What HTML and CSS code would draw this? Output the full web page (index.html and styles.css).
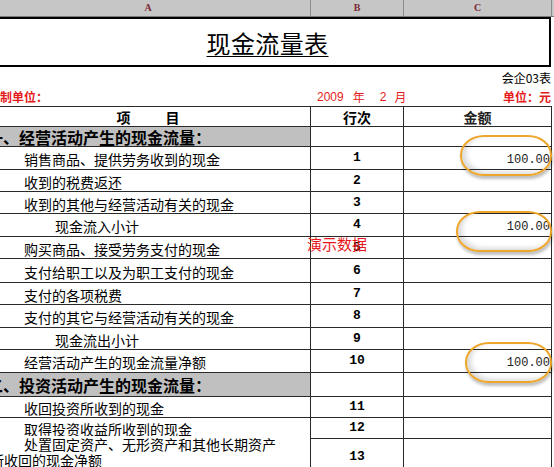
FILE: index.html
```html
<!DOCTYPE html>
<html lang="zh">
<head>
<meta charset="utf-8">
<title>现金流量表</title>
<link rel="stylesheet" href="styles.css">
</head>
<body>
<div class="sheet">
  <div class="colbar">
    <div class="ch">A</div><div class="ch">B</div><div class="ch">C</div><div class="ch"></div>
  </div>
  <div class="title"><span class="title-text">现金流量表</span></div>
  <div class="meta1">会企03表</div>
  <div class="meta2">
    <div class="m-a">编制单位：</div>
    <div class="m-b"><span>2009</span><span class="gap1">年</span><span class="gap2">2</span><span class="gap3">月</span></div>
    <div class="m-c">单位：元</div>
  </div>
  <div class="grid">
    <div class="c a hd r-h">项&nbsp;&nbsp;&nbsp;&nbsp;&nbsp;&nbsp;&nbsp;&nbsp;&nbsp;&nbsp;&nbsp;目</div><div class="c b hd r-h">行次</div><div class="c v hd r-h">金额</div>

    <div class="c a sec r-s1">一、经营活动产生的现金流量：</div><div class="c b r-s1"></div><div class="c v r-s1"></div>

    <div class="c a r1">销售商品、提供劳务收到的现金</div><div class="c b r1">1</div><div class="c v r1">100.00</div>
    <div class="c a r2">收到的税费返还</div><div class="c b r2">2</div><div class="c v r2"></div>
    <div class="c a r3">收到的其他与经营活动有关的现金</div><div class="c b r3">3</div><div class="c v r3"></div>
    <div class="c a sub r4">现金流入小计</div><div class="c b r4">4</div><div class="c v r4">100.00</div>
    <div class="c a r5">购买商品、接受劳务支付的现金</div><div class="c b r5">5</div><div class="c v r5"></div>
    <div class="c a r6">支付给职工以及为职工支付的现金</div><div class="c b r6">6</div><div class="c v r6"></div>
    <div class="c a r7">支付的各项税费</div><div class="c b r7">7</div><div class="c v r7"></div>
    <div class="c a r8">支付的其它与经营活动有关的现金</div><div class="c b r8">8</div><div class="c v r8"></div>
    <div class="c a sub r9">现金流出小计</div><div class="c b r9">9</div><div class="c v r9"></div>
    <div class="c a r10">经营活动产生的现金流量净额</div><div class="c b r10">10</div><div class="c v r10">100.00</div>

    <div class="c a sec r-s2">二、投资活动产生的现金流量：</div><div class="c b r-s2"></div><div class="c v r-s2"></div>

    <div class="c a r11">收回投资所收到的现金</div><div class="c b r11">11</div><div class="c v r11"></div>
    <div class="c a r12">取得投资收益所收到的现金</div><div class="c b r12">12</div><div class="c v r12"></div>
    <div class="c a wrap r13"><span class="l1">处置固定资产、无形资产和其他长期资产</span><span class="l2">所收回的现金净额</span></div><div class="c b r13">13</div><div class="c v r13"></div>
  </div>
</div>

<div class="ring ring1"></div>
<div class="ring ring2"></div>
<div class="ring ring3"></div>
<div class="demo">演示数据</div>
</body>
</html>
```

FILE: styles.css
```css
html, body {
  margin: 0;
  padding: 0;
  background: #fff;
}
body {
  width: 554px;
  height: 467px;
  overflow: hidden;
  position: relative;
  font-family: "Noto Sans CJK SC", "Noto Sans", sans-serif;
  color: #000;
}
.sheet {
  margin-left: -14px;
  width: 570px;
}

/* column letter bar */
.colbar {
  display: grid;
  grid-template-columns: 324px 92px 147px 1fr;
  column-gap: 1px;
  height: 16px;
  background: #8c8c8c;
  border-bottom: 1px solid #7a7a7a;
}
.ch {
  background: #c6c6c6;
  color: #7a2a35;
  font-family: "Liberation Serif", serif;
  font-weight: bold;
  font-size: 10px;
  line-height: 16px;
  text-align: center;
}

/* title box */
.title {
  width: 563px;
  height: 46px;
  border-top: 2px solid #000;
  border-bottom: 2px solid #000;
  border-right: 2px solid #000;
  display: flex;
  align-items: center;
  justify-content: center;
}
.title-text {
  font-size: 24px;
  line-height: 28px;
  font-weight: 400;
  text-decoration: underline;
  text-decoration-thickness: 1px;
  text-underline-offset: 3px;
  margin-top: 2px;
  letter-spacing: 0.4px;
}

.meta1 {
  width: 565px;
  height: 20px;
  font-size: 12px;
  line-height: 22px;
  text-align: right;
}
.meta2 {
  display: grid;
  grid-template-columns: 324px 92px 147px;
  column-gap: 1px;
  height: 19px;
  font-size: 12px;
  line-height: 20px;
  color: #e41b1b;
}
.m-a {
  padding-left: 2px;
  font-weight: bold;
}
.m-b {
  padding-left: 6px;
  font-family: "Liberation Sans", "Noto Sans CJK SC", sans-serif;
  font-size: 12px;
  display: flex;
}
.gap1 {
  margin-left: 9px;
  font-family: "Noto Sans CJK SC", sans-serif;
}
.gap2 {
  margin-left: 15px;
}
.gap3 {
  margin-left: 8px;
  font-family: "Noto Sans CJK SC", sans-serif;
}
.m-c {
  text-align: right;
  font-weight: bold;
}

/* table grid */
.grid {
  display: grid;
  grid-template-columns: 324px 92px 147px;
  grid-template-rows: 19px 19px 22px 21px 21px 22px 21px 23px 21px 22px 21px 22px 23px 20px 20px 40px;
  gap: 1px;
  padding: 1px 1px 0 0;
  width: 565px;
  background: #2a2a2a;
}
.c {
  background: #fff;
  display: flex;
  align-items: center;
  font-size: 14px;
  line-height: 16px;
  white-space: nowrap;
  overflow: visible;
}
.a {
  padding-left: 38px;
  padding-top: 2px;
}
.hd {
  font-weight: bold;
  justify-content: center;
  padding: 0;
  font-size: 14px;
}
.a.hd {
  padding-left: 0;
}
.sec {
  background: #c0c0c0;
  font-weight: bold;
  font-size: 16px;
  padding-left: 1px;
  padding-top: 0;
}
.sub {
  padding-left: 69px;
}
.b {
  justify-content: center;
  font-family: "Liberation Mono", monospace;
  font-weight: bold;
  font-size: 13px;
}
.v {
  justify-content: flex-end;
  align-items: flex-end;
  font-family: "Liberation Mono", monospace;
  font-size: 12px;
  line-height: 14px;
  padding-right: 1px;
  padding-bottom: 2px;
  color: #222;
}
.hd.b, .hd.v {
  font-family: "Noto Sans CJK SC", sans-serif;
  font-size: 14px;
  justify-content: center;
  align-items: center;
  padding: 0;
}
.wrap {
  flex-direction: column;
  align-items: flex-start;
  justify-content: flex-start;
  padding-left: 4px;
  padding-top: 0;
  margin-top: -3px;
}
.l1 {
  padding-left: 34px;
  line-height: 16px;
}
.l2 {
  line-height: 16px;
}
.r13.b {
  align-items: flex-start;
  padding-top: 10px;
}

/* overlays */
.ring {
  position: absolute;
  border: 2px solid #eda52a;
  border-radius: 24px / 20px;
  box-shadow: 1px 3px 3px rgba(0, 0, 0, 0.25), inset 4px -2px 5px rgba(0, 0, 0, 0.15);
}
.ring1 {
  left: 460px;
  top: 135px;
  width: 88px;
  height: 37px;
}
.ring2 {
  left: 456px;
  top: 211px;
  width: 92px;
  height: 37px;
}
.ring3 {
  left: 465px;
  top: 342px;
  width: 83px;
  height: 37px;
}
.demo {
  position: absolute;
  left: 307px;
  top: 235px;
  font-size: 15px;
  line-height: 18px;
  color: #e8181c;
}
```
